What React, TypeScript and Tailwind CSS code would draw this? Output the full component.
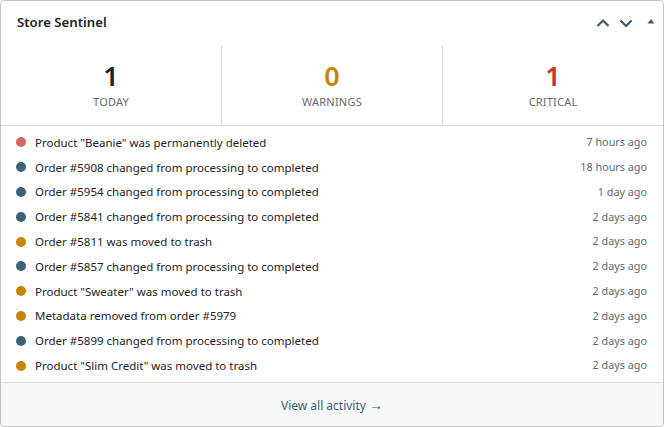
const events = [
  { text: 'Product "Beanie" was permanently deleted', time: "7 hours ago", level: "critical" },
  { text: "Order #5908 changed from processing to completed", time: "18 hours ago", level: "info" },
  { text: "Order #5954 changed from processing to completed", time: "1 day ago", level: "info" },
  { text: "Order #5841 changed from processing to completed", time: "2 days ago", level: "info" },
  { text: "Order #5811 was moved to trash", time: "2 days ago", level: "warning" },
  { text: "Order #5857 changed from processing to completed", time: "2 days ago", level: "info" },
  { text: 'Product "Sweater" was moved to trash', time: "2 days ago", level: "warning" },
  { text: "Metadata removed from order #5979", time: "2 days ago", level: "warning" },
  { text: "Order #5899 changed from processing to completed", time: "2 days ago", level: "info" },
  { text: 'Product "Slim Credit" was moved to trash', time: "2 days ago", level: "warning" },
];

const dotClass: Record<string, string> = {
  critical: "bg-[#d86565]",
  info: "bg-[#3d6177]",
  warning: "bg-[#c98300]",
};

const Stat = ({ value, label, color, last }: { value: string; label: string; color: string; last?: boolean }) => (
  <div className={`flex-1 flex flex-col items-center pt-[13px] ${last ? "" : "border-r border-[#dcdcde]"}`}>
    <div className={`text-[27px] leading-[36px] font-semibold ${color}`}>{value}</div>
    <div className="text-[11px] leading-[16px] uppercase tracking-[0.2px] text-[#646970]">{label}</div>
  </div>
);

const App = () => {
  return (
    <div className="w-[664px] h-[427px] bg-white" style={{ fontFamily: '"Noto Sans", "Open Sans", sans-serif' }}>
      <div className="h-full flex flex-col border border-[#c3c4c7] rounded-[4px] overflow-hidden">
        <div className="h-[44px] flex items-center justify-between pl-[16px] pr-[5px]">
          <h2 className="text-[13.2px] font-semibold text-[#1d2327]">Store Sentinel</h2>
          <div className="flex items-center gap-[9px] text-[#3c5a70]">
            <svg width="14" height="14" viewBox="0 0 14 14" fill="none" stroke="currentColor" strokeWidth="2.2">
              <path d="M1.5 10 L7 4.5 L12.5 10" />
            </svg>
            <svg width="14" height="14" viewBox="0 0 14 14" fill="none" stroke="currentColor" strokeWidth="2.2">
              <path d="M1.5 4.5 L7 10 L12.5 4.5" />
            </svg>
            <svg width="14" height="14" viewBox="0 0 14 14" className="ml-[2px] mb-[4px]">
              <path d="M3.5 9.5 L7 5 L10.5 9.5 Z" fill="#50575e" />
            </svg>
          </div>
        </div>
        <div className="h-[81px] flex border-b border-[#dcdcde]">
          <Stat value="1" label="Today" color="text-[#1d2327]" />
          <Stat value="0" label="Warnings" color="text-[#c98300]" />
          <Stat value="1" label="Critical" color="text-[#c8352b]" last />
        </div>
        <ul className="flex-1 pt-[4px]">
          {events.map((e, i) => (
            <li key={i} className="h-[24.8px] flex items-center pl-[15px] pr-[16px]">
              <span className={`w-[10px] h-[10px] rounded-full shrink-0 ${dotClass[e.level]}`} />
              <span className="ml-[9px] text-[11.5px] text-[#1d2327] flex-1">{e.text}</span>
              <span className="text-[10.8px] text-[#646970]">{e.time}</span>
            </li>
          ))}
        </ul>
        <div className="h-[44px] bg-[#f6f7f7] border-t border-[#dcdcde] flex items-center justify-center">
          <a className="text-[12px] text-[#3e5f75]">
            View all activity <span className="text-[14px]">→</span>
          </a>
        </div>
      </div>
    </div>
  );
};

export default App;
